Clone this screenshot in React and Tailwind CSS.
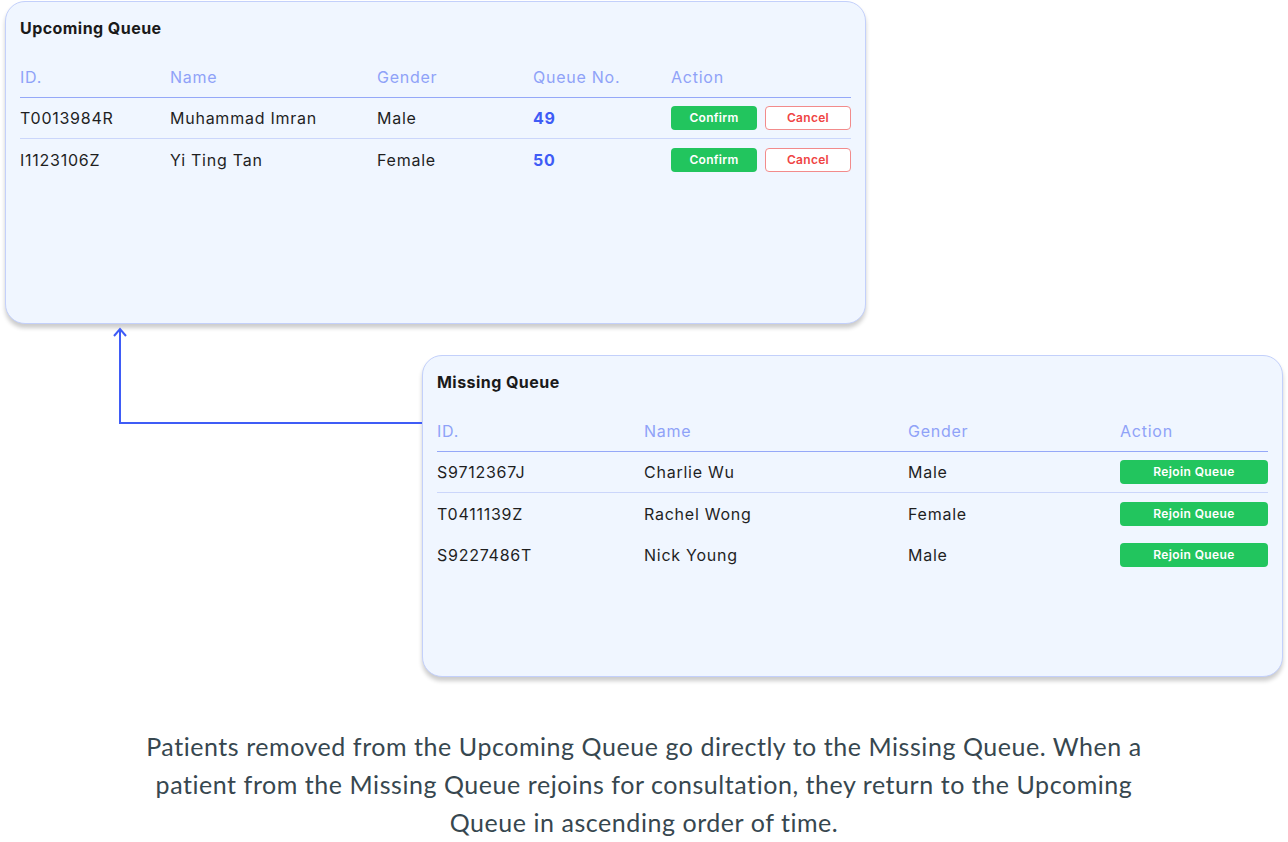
const upcoming = [
  { id: 'T0013984R', name: 'Muhammad Imran', gender: 'Male', no: 49 },
  { id: 'I1123106Z', name: 'Yi Ting Tan', gender: 'Female', no: 50 },
]

const missing = [
  { id: 'S9712367J', name: 'Charlie Wu', gender: 'Male' },
  { id: 'T0411139Z', name: 'Rachel Wong', gender: 'Female' },
  { id: 'S9227486T', name: 'Nick Young', gender: 'Male' },
]

const font = { fontFamily: 'Inter, "Noto Sans", sans-serif' }

function Card({ title, className, children }) {
  return (
    <section
      className={`w-[861px] rounded-[20px] border border-[#c3d0fb] bg-[#f0f6ff] px-[14px] pt-[15px] shadow-[0_4px_4px_rgba(0,0,0,0.2)] ${className}`}
    >
      <h2 className="h-[22px] text-[16px] font-bold leading-[22px] tracking-[0.45px] text-[#1a1a1a]">{title}</h2>
      <div className="mt-[18px]">{children}</div>
    </section>
  )
}

export default function App() {
  return (
    <div className="relative h-[842px] w-[1288px] bg-white text-[#1f1f1f]" style={font}>
      <div className="pt-px pl-[5px]">
        <Card title="Upcoming Queue" className="h-[323px]">
          <div className="grid h-[41px] grid-cols-[150px_207px_156px_138px_1fr] items-center border-b border-[#95a8f8] text-[16px] tracking-[0.75px] text-[#8fa2f8]">
            <span>ID.</span>
            <span>Name</span>
            <span>Gender</span>
            <span>Queue No.</span>
            <span>Action</span>
          </div>
          {upcoming.map((r, i) => (
            <div
              key={r.id}
              className={`grid h-[41px] grid-cols-[150px_207px_156px_138px_1fr] items-center text-[16px] tracking-[0.75px] ${i === 0 ? 'border-b border-[#cbd6fb]' : ''}`}
            >
              <span>{r.id}</span>
              <span>{r.name}</span>
              <span>{r.gender}</span>
              <span className="font-bold text-[#3f5cf6]">{r.no}</span>
              <span className="flex gap-2 tracking-[0.3px]">
                <button className="h-[24px] w-[86px] rounded-[4px] bg-[#22c55e] text-[12px] font-semibold text-white">Confirm</button>
                <button className="h-[24px] w-[86px] rounded-[4px] border border-[#f28b8b] bg-white text-[12px] font-semibold text-[#ef4444]">Cancel</button>
              </span>
            </div>
          ))}
        </Card>
      </div>

      <div className="mt-[31px] pl-[422px]">
        <Card title="Missing Queue" className="h-[322px]">
          <div className="grid h-[41px] grid-cols-[207px_264px_212px_1fr] items-center border-b border-[#95a8f8] text-[16px] tracking-[0.75px] text-[#8fa2f8]">
            <span>ID.</span>
            <span>Name</span>
            <span>Gender</span>
            <span>Action</span>
          </div>
          {missing.map((r, i) => (
            <div
              key={r.id}
              className={`grid h-[41px] grid-cols-[207px_264px_212px_1fr] items-center text-[16px] tracking-[0.75px] ${i === 0 ? 'border-b border-[#cbd6fb]' : ''}`}
            >
              <span>{r.id}</span>
              <span>{r.name}</span>
              <span>{r.gender}</span>
              <button className="h-[24px] w-[148px] rounded-[4px] bg-[#22c55e] text-[12px] font-semibold tracking-[0.4px] text-white">Rejoin Queue</button>
            </div>
          ))}
        </Card>
      </div>

      <svg className="absolute left-[112px] top-[326px]" width="312" height="100" viewBox="0 0 312 100" fill="none">
        <path d="M8 3 V97 H310" stroke="#3f5cf6" strokeWidth="2" />
        <path d="M2 10 L8 3 L14 10" stroke="#3f5cf6" strokeWidth="2" />
      </svg>

      <p
        className="mt-[50px] text-center text-[25px] leading-[38px] tracking-[0.55px] text-[#37474f]"
        style={{ fontFamily: 'Lato, "Noto Sans", sans-serif' }}
      >
        Patients removed from the Upcoming Queue go directly to the Missing Queue. When a
        <br />
        patient from the Missing Queue rejoins for consultation, they return to the Upcoming
        <br />
        Queue in ascending order of time.
      </p>
    </div>
  )
}
